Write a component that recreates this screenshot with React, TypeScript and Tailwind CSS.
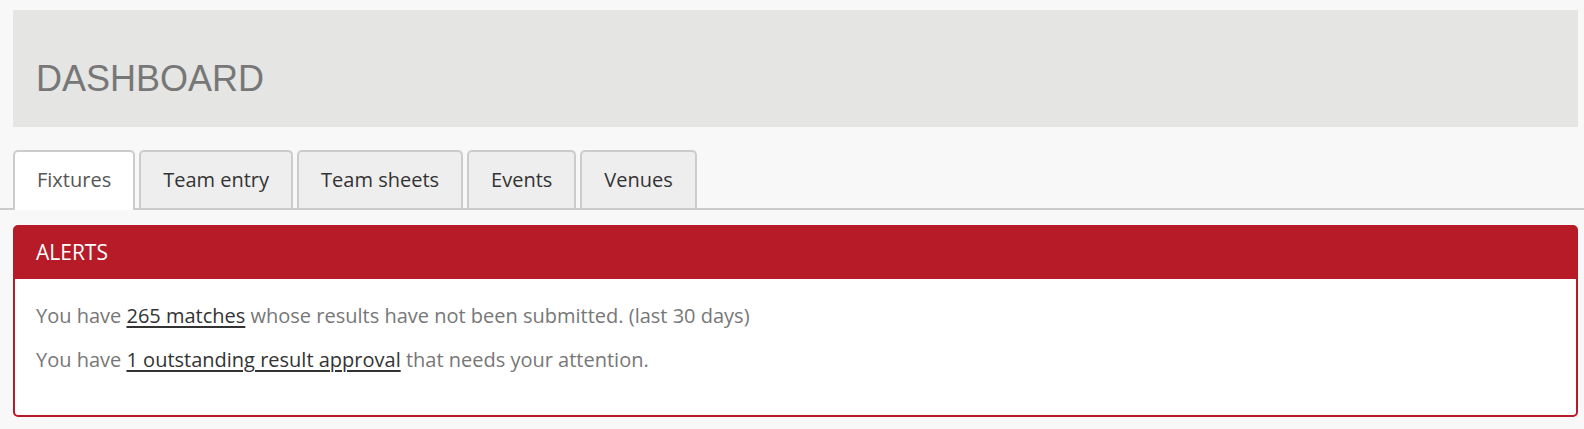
const tabs = ["Fixtures", "Team entry", "Team sheets", "Events", "Venues"];

const App = () => {
  return (
    <div className="min-h-[429px] bg-[#f8f8f8] pt-[10px] font-['Open_Sans',sans-serif]">
      <div className="mx-[13px] mr-[6px] h-[117px] bg-[#e5e5e3] flex items-end pb-[30px] pl-[23px]">
        <h1 className="font-['Liberation_Sans',Arial,sans-serif] text-[36px] leading-none text-[#777]">DASHBOARD</h1>
      </div>

      <div className="mt-[23px] border-b-2 border-[#ccc] flex gap-[4px] pl-[13px]">
        {tabs.map((t, i) => (
          <div
            key={t}
            className={
              i === 0
                ? "h-[60px] -mb-[2px] px-[22px] pb-[3px] flex items-center border-2 border-b-0 border-[#ccc] rounded-t-[5px] bg-white text-[20px] text-[#555]"
                : "h-[58px] px-[22px] pb-[1px] flex items-center border-2 border-b-0 border-[#ccc] rounded-t-[5px] bg-[#eee] text-[20px] text-[#333]"
            }
          >
            {t}
          </div>
        ))}
      </div>

      <div className="mt-[15px] ml-[13px] mr-[6px] border-2 border-[#b61b27] rounded-[5px] bg-white">
        <div className="h-[52px] bg-[#b61b27] flex items-center pl-[21px] text-white text-[21px]">ALERTS</div>
        <div className="px-[21px] pt-[27px] pb-[45px] text-[20px] text-[#777] leading-none">
          <p>
            You have <a href="#" className="text-[#333] underline underline-offset-[3px]">265 matches</a> whose results have not been submitted. (last 30 days)
          </p>
          <p className="mt-[24px]">
            You have <a href="#" className="text-[#333] underline underline-offset-[3px]">1 outstanding result approval</a> that needs your attention.
          </p>
        </div>
      </div>
    </div>
  );
};

export default App;
